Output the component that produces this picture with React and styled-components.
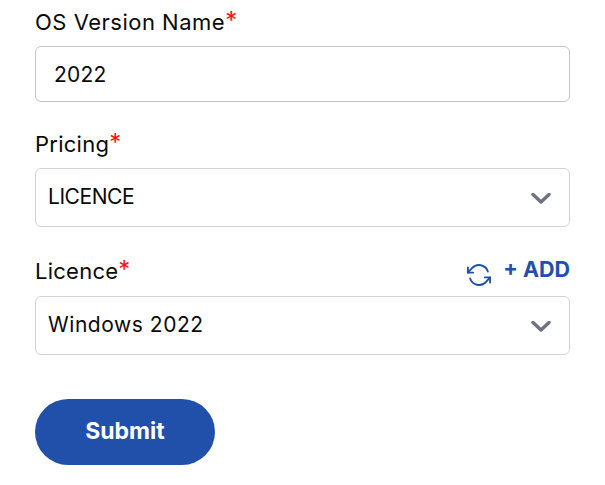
import styled, { createGlobalStyle } from "styled-components"

const GlobalStyle = createGlobalStyle`
  html, body {
    margin: 0;
    padding: 0;
    background: #fff;
  }
  * {
    box-sizing: border-box;
  }
`

const Form = styled.form`
  display: flex;
  flex-direction: column;
  width: 605px;
  height: 485px;
  overflow: hidden;
  padding: 8px 35px 0;
  font-family: Inter, "Open Sans", sans-serif;
  color: #0a0a0a;
`

const Field = styled.div`
  display: flex;
  flex-direction: column;
  margin-bottom: ${({ $gap }) => $gap}px;
`

const LabelRow = styled.div`
  display: flex;
  align-items: center;
  justify-content: space-between;
  height: 28px;
  margin-bottom: ${({ $gap }) => $gap}px;
`

const Label = styled.label`
  font-size: 22px;
  line-height: 27px;
  letter-spacing: ${({ $spacing = 0.25 }) => $spacing}px;
`

const Star = styled.span`
  color: #ff0f14;
  font-size: 24px;
  line-height: 0;
  letter-spacing: 0;
  vertical-align: 1px;
`

const Input = styled.input`
  width: 100%;
  height: 56px;
  padding: 0 18px;
  border: 1px solid #c4c4c8;
  border-radius: 6px;
  background: #fff;
  font: inherit;
  font-size: 21px;
  letter-spacing: 0.25px;
  color: #0a0a0a;
  outline: none;
`

const SelectBox = styled.div`
  display: flex;
  align-items: center;
  justify-content: space-between;
  height: 59px;
  padding: 0 18px 2px 12px;
  border: 1px solid #d2d3da;
  border-radius: 6px;
  font-size: 21px;
`

const SelectValue = styled.span`
  letter-spacing: ${({ $spacing }) => $spacing}px;
`

const Actions = styled.div`
  display: flex;
  align-items: center;
  gap: 10px;
  color: #2150aa;
`

const AddLink = styled.a`
  font-size: 21.5px;
  font-weight: 700;
  line-height: 24px;
  margin-top: -4px;
`

const SubmitButton = styled.button`
  width: 180px;
  height: 66px;
  padding: 0 0 2px;
  border: none;
  border-radius: 33px;
  background: #2150aa;
  color: #fff;
  font: inherit;
  font-size: 23px;
  font-weight: 700;
`

const Chevron = () => (
  <svg width="20" height="12" viewBox="0 0 20 12" fill="none" stroke="#6b7280" strokeWidth="3.4" strokeLinecap="round" strokeLinejoin="round" style={{ marginTop: 2 }}>
    <path d="M2 2.5l8 7.5 8-7.5" />
  </svg>
)

const RefreshIcon = () => (
  <svg width="28" height="28" viewBox="0 0 24 24" fill="none" stroke="#2150aa" strokeWidth="1.6" strokeLinecap="round" strokeLinejoin="round" style={{ marginTop: 8 }}>
    <path d="M2.5 5.5v4.5h4.5" />
    <path d="M21.5 18.5V14H17" />
    <path d="M19.6 9A8 8 0 0 0 6 6.2L2.5 10" />
    <path d="M4.4 15A8 8 0 0 0 18 17.8l3.5-3.8" />
  </svg>
)

export default function App() {
  return (
    <>
      <GlobalStyle />
      <Form>
        <Field $gap={28}>
          <LabelRow $gap={10}>
            <Label $spacing={0.5}>OS Version Name<Star>*</Star></Label>
          </LabelRow>
          <Input defaultValue="2022" />
        </Field>
        <Field $gap={30}>
          <LabelRow $gap={10}>
            <Label>Pricing<Star>*</Star></Label>
          </LabelRow>
          <SelectBox>
            <SelectValue $spacing={-0.45}>LICENCE</SelectValue>
            <Chevron />
          </SelectBox>
        </Field>
        <Field $gap={44}>
          <LabelRow $gap={11}>
            <Label>Licence<Star>*</Star></Label>
            <Actions>
              <RefreshIcon />
              <AddLink>+ ADD</AddLink>
            </Actions>
          </LabelRow>
          <SelectBox>
            <SelectValue $spacing={0.55}>Windows 2022</SelectValue>
            <Chevron />
          </SelectBox>
        </Field>
        <SubmitButton type="button">Submit</SubmitButton>
      </Form>
    </>
  )
}
